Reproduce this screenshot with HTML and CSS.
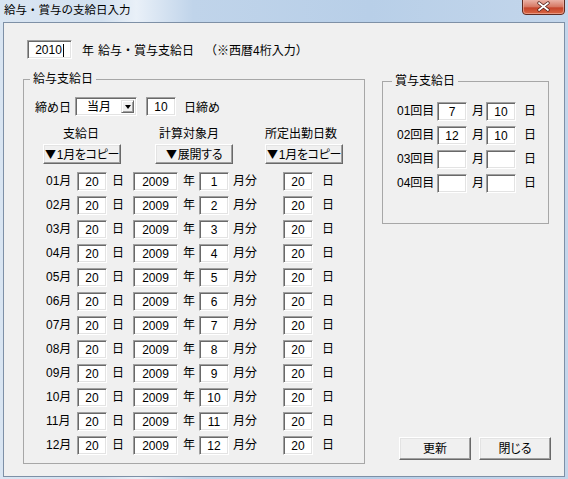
FILE: index.html
```html
<!DOCTYPE html>
<html lang="ja">
<head>
<meta charset="utf-8">
<title>給与・賞与の支給日入力</title>
<link rel="stylesheet" href="styles.css">
</head>
<body>
<div class="window">
  <div class="titlebar">
    <span class="title">給与・賞与の支給日入力</span>
    <span class="close">
      <svg width="43" height="15" viewBox="0 0 43 15">
        <defs>
          <linearGradient id="cg" x1="0" y1="0" x2="0" y2="1">
            <stop offset="0" stop-color="#eab2a6"/>
            <stop offset="0.45" stop-color="#d77a66"/>
            <stop offset="0.55" stop-color="#c5452c"/>
            <stop offset="1" stop-color="#dc6a45"/>
          </linearGradient>
        </defs>
        <path d="M0.5 0 V11 Q0.5 14.5 4 14.5 H39 Q42.5 14.5 42.5 11 V0" fill="url(#cg)" stroke="#5e2b22"/>
        <path d="M1.5 0 V11 Q1.5 13.5 4 13.5 H39 Q41.5 13.5 41.5 11 V0" fill="none" stroke="#f2b9ab" stroke-opacity="0.6"/>
        <path d="M17 3 L26 10 M26 3 L17 10" stroke="#4d1e16" stroke-width="3.4" stroke-linecap="round"/>
        <path d="M17 3 L26 10 M26 3 L17 10" stroke="#ffffff" stroke-width="1.8" stroke-linecap="round"/>
      </svg>
    </span>
  </div>
  <div class="client">
    <div class="year-row">
      <div class="field w45">2010<span class="caret"></span></div>
      <span class="yr">年</span>
      <span class="yr-title">給与・賞与支給日</span>
      <span class="note">（※西暦4桁入力）</span>
    </div>
    <div class="main">
      <fieldset class="group salary">
        <legend>給与支給日</legend>
        <div class="sal-body">
          <div class="close-row">
            <span class="close-label">締め日</span>
            <div class="combo"><span class="combo-text">当月</span><span class="combo-btn"><span class="tri"></span></span></div>
            <div class="field w30">10</div>
            <span class="close-suffix">日締め</span>
          </div>
          <div class="col-heads">
            <span class="h1">支給日</span>
            <span class="h2">計算対象月</span>
            <span class="h3">所定出勤日数</span>
          </div>
          <div class="col-btns">
            <button class="btn b1"><span class="arrow">▼</span>1月をコピー</button>
            <button class="btn b2"><span class="arrow">▼</span>展開する</button>
            <button class="btn b3"><span class="arrow">▼</span>1月をコピー</button>
          </div>
          <div class="grid">
            <span>01月</span><div class="field">20</div><span class="p5">日</span><div class="field">2009</div><span class="p5">年</span><div class="field">1</div><span class="p4">月分</span><div class="field">20</div><span class="p9">日</span>
            <span>02月</span><div class="field">20</div><span class="p5">日</span><div class="field">2009</div><span class="p5">年</span><div class="field">2</div><span class="p4">月分</span><div class="field">20</div><span class="p9">日</span>
            <span>03月</span><div class="field">20</div><span class="p5">日</span><div class="field">2009</div><span class="p5">年</span><div class="field">3</div><span class="p4">月分</span><div class="field">20</div><span class="p9">日</span>
            <span>04月</span><div class="field">20</div><span class="p5">日</span><div class="field">2009</div><span class="p5">年</span><div class="field">4</div><span class="p4">月分</span><div class="field">20</div><span class="p9">日</span>
            <span>05月</span><div class="field">20</div><span class="p5">日</span><div class="field">2009</div><span class="p5">年</span><div class="field">5</div><span class="p4">月分</span><div class="field">20</div><span class="p9">日</span>
            <span>06月</span><div class="field">20</div><span class="p5">日</span><div class="field">2009</div><span class="p5">年</span><div class="field">6</div><span class="p4">月分</span><div class="field">20</div><span class="p9">日</span>
            <span>07月</span><div class="field">20</div><span class="p5">日</span><div class="field">2009</div><span class="p5">年</span><div class="field">7</div><span class="p4">月分</span><div class="field">20</div><span class="p9">日</span>
            <span>08月</span><div class="field">20</div><span class="p5">日</span><div class="field">2009</div><span class="p5">年</span><div class="field">8</div><span class="p4">月分</span><div class="field">20</div><span class="p9">日</span>
            <span>09月</span><div class="field">20</div><span class="p5">日</span><div class="field">2009</div><span class="p5">年</span><div class="field">9</div><span class="p4">月分</span><div class="field">20</div><span class="p9">日</span>
            <span>10月</span><div class="field">20</div><span class="p5">日</span><div class="field">2009</div><span class="p5">年</span><div class="field">10</div><span class="p4">月分</span><div class="field">20</div><span class="p9">日</span>
            <span>11月</span><div class="field">20</div><span class="p5">日</span><div class="field">2009</div><span class="p5">年</span><div class="field">11</div><span class="p4">月分</span><div class="field">20</div><span class="p9">日</span>
            <span>12月</span><div class="field">20</div><span class="p5">日</span><div class="field">2009</div><span class="p5">年</span><div class="field">12</div><span class="p4">月分</span><div class="field">20</div><span class="p9">日</span>
          </div>
        </div>
      </fieldset>
      <div class="side">
        <fieldset class="group bonus">
          <legend>賞与支給日</legend>
          <div class="bonus-body">
            <span>01回目</span><div class="field">7</div><span class="p5">月</span><div class="field">10</div><span class="p8">日</span>
            <span>02回目</span><div class="field">12</div><span class="p5">月</span><div class="field">10</div><span class="p8">日</span>
            <span>03回目</span><div class="field"></div><span class="p5">月</span><div class="field"></div><span class="p8">日</span>
            <span>04回目</span><div class="field"></div><span class="p5">月</span><div class="field"></div><span class="p8">日</span>
          </div>
        </fieldset>
        <div class="actions">
          <button class="btn act">更新</button>
          <button class="btn act">閉じる</button>
        </div>
      </div>
    </div>
  </div>
</div>
</body>
</html>
```

FILE: styles.css
```css
* { box-sizing: border-box; }
html, body { margin: 0; padding: 0; }
body {
  width: 568px;
  height: 479px;
  overflow: hidden;
  font-family: "Liberation Sans", "Noto Sans CJK JP", sans-serif;
  font-size: 12px;
  color: #000;
}
.window {
  width: 568px;
  height: 479px;
  padding: 0 3px 2px 3px;
  display: flex;
  flex-direction: column;
  background: linear-gradient(to right, #d9e5f2 0%, #d3e1f0 18%, #e9f0f8 24%, #c0d4ea 34%, #b8cfe8 65%, #c3d6eb 100%);
}
.titlebar {
  height: 22px;
  flex: none;
  display: flex;
  align-items: flex-start;
}
.title {
  font-family: "Noto Sans CJK JP", sans-serif;
  font-size: 11.5px;
  line-height: 14px;
  margin: 2px 0 0 1px;
  color: #000;
}
.close {
  margin-left: auto;
  width: 43px;
  height: 15px;
  display: block;
}
.close svg { display: block; }
.client {
  flex: 1;
  border: 1px solid #7e90a6;
  background: #f0f0f0;
  padding: 17px 0 0 19px;
  display: flex;
  flex-direction: column;
}
.field {
  width: 30px;
  height: 19px;
  background: #fff;
  border: 1px solid;
  border-color: #a0a0a0 #fff #fff #a0a0a0;
  box-shadow: inset 1px 1px 0 #696969, inset -1px -1px 0 #e3e3e3;
  display: flex;
  align-items: center;
  justify-content: center;
  line-height: 14px;
  padding-top: 1px;
}
.w45 { width: 45px; }
.w30 { width: 30px; }
.caret {
  display: inline-block;
  width: 1px;
  height: 13px;
  background: #000;
  margin-left: 1px;
}
.year-row {
  margin-left: 4px;
  height: 19px;
  display: flex;
  align-items: center;
}
.yr { margin-left: 10px; }
.yr-title { margin-left: 4px; }
.note { margin-left: 11px; }
.main {
  margin-top: 13px;
  display: flex;
  align-items: stretch;
}
.group {
  margin: 0;
  padding: 0;
  min-width: 0;
  border: 1px solid #a7a7a7;
}
.group legend {
  padding: 0 3px;
  line-height: 14px;
  font-size: 12px;
}
.salary { width: 342px; flex: none; }
.salary legend { margin-left: 6px; }
.sal-body { padding: 11px 0 6px 0; }
.close-row {
  display: flex;
  align-items: center;
  height: 19px;
  padding-left: 11px;
}
.close-label { width: 40px; }
.combo {
  width: 62px;
  height: 19px;
  background: #fff;
  border: 1px solid;
  border-color: #a0a0a0 #fff #fff #a0a0a0;
  box-shadow: inset 1px 1px 0 #696969, inset -1px -1px 0 #e3e3e3;
  display: flex;
  align-items: center;
  padding: 0 2px 0 11px;
}
.combo-text { flex: 1; line-height: 14px; }
.combo-btn {
  width: 13px;
  height: 13px;
  background: #f0f0f0;
  border: 1px solid;
  border-color: #e3e3e3 #696969 #696969 #e3e3e3;
  box-shadow: inset 1px 1px 0 #fff, inset -1px -1px 0 #a0a0a0;
  display: flex;
  align-items: center;
  justify-content: center;
}
.tri {
  width: 0;
  height: 0;
  border-left: 3.5px solid transparent;
  border-right: 3.5px solid transparent;
  border-top: 4px solid #000;
  margin-top: 1px;
}
.close-row .field { margin-left: 9px; }
.close-suffix { margin-left: 8px; }
.col-heads {
  margin-top: 11px;
  height: 14px;
  line-height: 14px;
  display: flex;
}
.col-heads .h1 { margin-left: 39px; width: 96px; }
.col-heads .h2 { width: 106px; }
.col-btns {
  margin-top: 3px;
  height: 20px;
  display: flex;
}
.btn {
  font-family: "Liberation Sans", "Noto Sans CJK JP", sans-serif;
  font-size: 12px;
  color: #000;
  background: #f0f0f0;
  border: 1px solid;
  border-color: #fff #696969 #696969 #fff;
  box-shadow: inset -1px -1px 0 #a0a0a0, inset 1px 1px 0 #e3e3e3;
  padding: 0;
  margin: 0;
  border-radius: 0;
  line-height: 14px;
  white-space: nowrap;
  font-feature-settings: "palt";
}
.arrow {
  font-family: "Noto Sans CJK JP", sans-serif;
  font-size: 11px;
  display: inline-block;
  width: 11px;
  margin-right: 1px;
}
.col-btns .btn { width: 78px; height: 20px; letter-spacing: -0.3px; }
.col-btns .b1 { margin-left: 19px; }
.col-btns .b2 { margin-left: 34px; }
.col-btns .b3 { margin-left: 32px; }
.grid {
  margin-top: 5px;
  padding-left: 22px;
  display: grid;
  grid-template-columns: 31px 30px 26px 45px 21px 30px 54px 30px auto;
  grid-auto-rows: 24px;
  align-items: center;
  line-height: 14px;
}
.p4 { padding-left: 4px; }
.p5 { padding-left: 5px; }
.p8 { padding-left: 8px; }
.p9 { padding-left: 9px; }
.grid .field:nth-child(9n+4) { width: 45px; }
.side {
  margin-left: 17px;
  width: 172px;
  display: flex;
  flex-direction: column;
}
.bonus { width: 167px; margin-top: 2px; }
.bonus legend { margin-left: 9px; }
.bonus-body {
  padding: 11px 0 28px 14px;
  display: grid;
  grid-template-columns: 40px 30px 19px 30px auto;
  grid-auto-rows: 24px;
  align-items: center;
  line-height: 14px;
}
.actions {
  margin-top: auto;
  margin-left: 17px;
  margin-bottom: 4px;
  display: flex;
  gap: 8px;
}
.actions .act { width: 72px; height: 23px; }
```
